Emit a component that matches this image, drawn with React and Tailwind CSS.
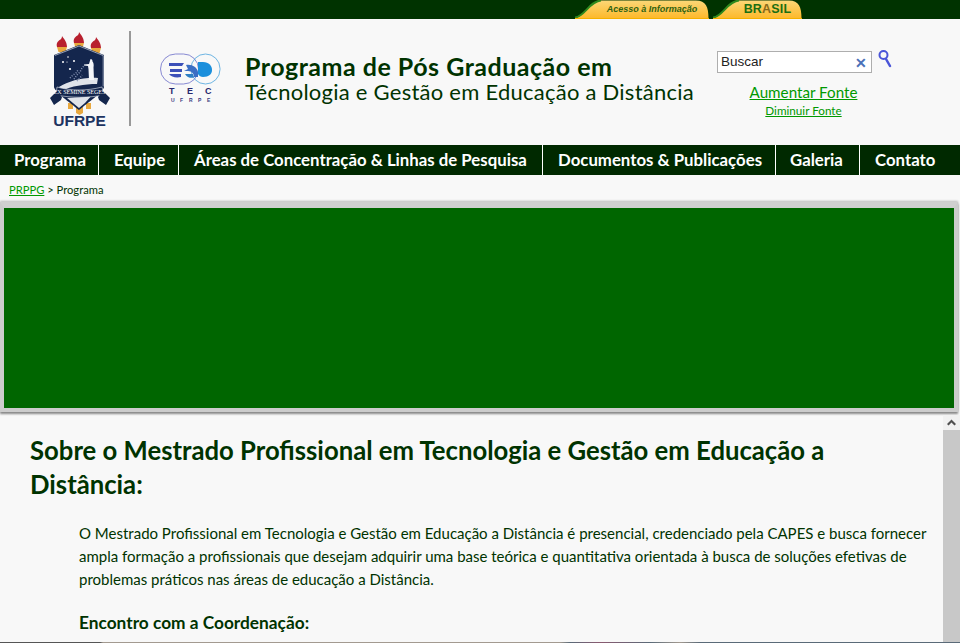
function Crest() {
  return (
    <svg width="60" height="97" viewBox="0 0 60 97" className="block">
      {[[12, 5], [29, 1], [46, 6]].map(([x, y], i) => (
        <g key={i}>
          <path d={`M${x - 5} ${y + 11}h10l-1.500 5h-7z`} fill="#e8a83e" />
          <path d={`M${x - 5} ${y + 11}c-1-4 1-6 3.500-7.500 1-1 1.500-2 1.500-3.500 1 2 5 5 5 11z`} fill="#b8202e" />
        </g>
      ))}
      <path d="M18 72h5v6h-5zM36 72h5v6h-5z" fill="#e8a83e" />
      <path d="M26 76h7v6l-3.500 2-3.500-2z" fill="#e8a83e" />
      <path d="M4 24 29 14l25 10v32c0 4-16 16-25 23C20 72 4 60 4 56z" fill="#14264d" />
      <path d="M4.800 24.500 29 15l24.200 9.500v31" fill="none" stroke="#cfd5e3" strokeWidth="0.700" />
      <path d="M9 56c10-6 24-10 39-9l-1 6c-13 0-25 2-36 7z" fill="#dfe3ea" />
      <path d="M17 67c8 0 16-1 26-4l-8 9-6 5z" fill="#dfe3ea" />
      <circle cx="13" cy="31" r="1" fill="#fff" /><circle cx="18" cy="26" r="0.800" fill="#fff" /><circle cx="24" cy="30" r="1" fill="#fff" /><circle cx="20" cy="38" r="1.100" fill="#fff" /><circle cx="17" cy="31" r="0.600" fill="#fff" />
      <path d="M40.500 28c1.500 0 2 1 2 2.500 1 1 1.500 3 1 6l.5 12.500h-5l-.5-11-.5-3-4-.5v-1l5-.5z" fill="#f4f6fa" />
      <path d="M24 48l3-4 3-3 2-4 2-2M20 47l3-3 3-2 2-3M27 50l3-3 2-3" stroke="#8592b3" strokeWidth="1.500" strokeDasharray="1 1.500" fill="none" />
      <path d="M7 56c14 4 30 4 45 0l2 8c-16 3-32 3-48 0z" fill="#14264d" stroke="#e6e9f0" strokeWidth="0.600" />
      <path d="M0 67l7-7 5 6-1 3-7 5zM60 67l-7-7-5 6 1 3 7 5z" fill="#14264d" />
      <text x="29.500" y="63" textAnchor="middle" fontSize="6" fill="#fff" fontFamily="Liberation Serif">EX SEMINE SEGES</text>
      <text x="29.500" y="95" textAnchor="middle" fontSize="15.500" fontWeight="700" fill="#1d3461" fontFamily="Liberation Sans">UFRPE</text>
    </svg>
  );
}
function Ead() {
  return (
    <svg width="62" height="50" viewBox="0 0 62 50" className="block">
      <rect x="0.500" y="1" width="38" height="30" rx="15" fill="none" stroke="#6a6cc8" strokeWidth="0.800" />
      <rect x="31" y="1" width="29" height="30" rx="14.500" fill="none" stroke="#4aa3dc" strokeWidth="0.800" />
      <path d="M9 10h15l-2 3H9zM10 16h12v3H10zM9 21h12v3c-5 1-10 0-12-3z" fill="#3c50b8" />
      <path d="M26 12c6-1 11 2 12 7v5h-4c0-3-2-6-6-6h-4l4-2z" fill="#3b6ec4" />
      <path d="M25 21h8l1 3.500c-3 1-7 0-9-3.500z" fill="#2f7fc4" />
      <path d="M38 9h5c6 0 9 4 9 8s-3 7-9 7c-2 0-4-1-5-3z" fill="#1b8fdc" />
      <text x="9 27 45" y="41" fontSize="9" fontWeight="700" fill="#26266b" fontFamily="Liberation Sans">TEC</text>
      <text x="11 20 29 38 47" y="48.500" fontSize="5" fontWeight="700" fill="#3a3a80" fontFamily="Liberation Sans">UFRPE</text>
    </svg>
  );
}
function Tab({ width, children }) {
  return (
    <div className="relative h-[19px]" style={{ width }}>
      <svg className="absolute inset-0" width={width} height="19" viewBox={`0 0 ${width} 19`}>
        <defs>
          <linearGradient id="tabg" x1="0" y1="0" x2="0" y2="1"><stop offset="0" stopColor="#fbd777" /><stop offset="1" stopColor="#fdb92c" /></linearGradient>
        </defs>
        <path d={`M0 18c10-1 14-17 26-17.500H${width - 13}c10 0 12.500 7 12.500 17.500z`} fill="url(#tabg)" />
        <path d="M0 17.500c10-1 14-16 26-17" fill="none" stroke="#2f8a1e" strokeWidth="2" />
        <path d={`M0 18.500H${width}`} stroke="#f5b000" />
      </svg>
      <div className="absolute inset-0 flex items-center justify-center pl-[20px]">{children}</div>
    </div>
  );
}
const nav = [
  ["Programa", "w-[99px] pl-[14px] border-r"],
  ["Equipe", "w-[80px] pl-[15px] border-r"],
  ["Áreas de Concentração & Linhas de Pesquisa", "w-[364px] pl-[15px] border-r"],
  ["Documentos & Publicações", "w-[233px] pl-[15px] border-r"],
  ["Galeria", "w-[84px] pl-[14px] border-r"],
  ["Contato", "pl-[15px]"],
];
export default function App() {
  return (
    <div className="h-[643px] w-[960px] overflow-hidden bg-[#f8f8f8] font-['Lato',sans-serif] text-[#003300]">
      <div className="flex h-[19px] gap-[4px] bg-[#003300] pl-[575px]">
        <Tab width={134}><span className="font-['Liberation_Sans'] text-[9px] font-bold italic text-[#2f6212]">Acesso à Informação</span></Tab>
        <Tab width={89}><span className="font-['Liberation_Sans'] text-[12.500px] font-bold leading-none tracking-[0.2px] text-[#1a6e12]">BR<span className="text-[#8a6a1a]">A</span>SIL</span></Tab>
      </div>
      <header className="flex h-[126px] items-start">
        <div className="ml-[50px] mt-[12px] w-[60px]"><Crest /></div>
        <div className="ml-[19px] mt-[12px] h-[95px] w-[2px] bg-[#999999]" />
        <div className="ml-[29px] mt-[34px] w-[62px]"><Ead /></div>
        <div className="ml-[23px] mt-[34px] w-[461px]">
          <div className="whitespace-nowrap text-[25px] font-bold leading-[27px] tracking-[0.5px] text-[#003300]">Programa de Pós Graduação em</div>
          <div className="whitespace-nowrap text-[22px] leading-[24px] tracking-[0.25px] text-[#003300]">Técnologia e Gestão em Educação a Distância</div>
        </div>
        <div className="ml-[11px] mt-[32px] w-[190px]">
          <div className="flex items-start">
            <div className="flex h-[22px] w-[155px] items-center justify-between border border-[#aeaeae] bg-white pl-[3px] pr-[4px] pt-[1px] font-['Liberation_Sans'] text-[13.500px] text-[#222222]">
              <span>Buscar</span>
              <span className="text-[14px] font-bold leading-none text-[#4a70b8]">✕</span>
            </div>
            <svg width="14" height="20" viewBox="0 0 14 20" className="ml-[6px] -mt-[2px]">
              <circle cx="5.500" cy="6" r="4" fill="none" stroke="#4a55d8" strokeWidth="2" />
              <path d="M8 10l4 7" stroke="#4a55d8" strokeWidth="2.500" strokeLinecap="round" />
            </svg>
          </div>
          <div className="mt-[9px] w-[173px] text-center leading-none">
            <a className="block text-[15.200px] leading-[20px] text-[#009900] underline">Aumentar Fonte</a>
            <a className="block text-[11.700px] leading-[16px] text-[#009900] underline">Diminuir Fonte</a>
          </div>
        </div>
      </header>
      <nav className="flex h-[30px] bg-[#002900]">
        {nav.map(([n, c]) => (
          <div key={n} className={`flex h-full items-center whitespace-nowrap border-white text-[16.800px] font-bold text-white ${c}`}>{n}</div>
        ))}
      </nav>
      <div className="h-[27px] pl-[9px] pt-[7px] text-[11.200px] leading-[16px]"><a className="text-[#009900] underline">PRPPG</a> &gt; Programa</div>
      <div className="h-[210px] w-[958px] border-x-[4px] border-b-[4px] border-t-[6px] border-x-[#cccccc] border-b-[#cccccc] border-t-[#d0d0d0] bg-[#006600] shadow-[0_2px_2px_#888888,0_-1px_2px_#bbbbbb]" />
      <div className="flex h-[230px] overflow-hidden">
        <main className="w-[943px] pl-[30px] pr-[10px] pt-[21px]">
          <h1 className="text-[25.700px] font-bold leading-[34px] text-[#003300]">Sobre o Mestrado Profissional em Tecnologia e Gestão em Educação a Distância:</h1>
          <p className="mt-[21px] pl-[49px] text-[15px] leading-[23px]">O Mestrado Profissional em Tecnologia e Gestão em Educação a Distância é presencial, credenciado pela CAPES e busca fornecer ampla formação a profissionais que desejam adquirir uma base teórica e quantitativa orientada à busca de soluções efetivas de problemas práticos nas áreas de educação a Distância.</p>
          <p className="mt-[20px] pl-[49px] text-[17.300px] font-bold leading-[24px]">Encontro com a Coordenação:</p>
        </main>
        <div className="ml-auto flex w-[17px] flex-col pt-[3px]">
          <div className="flex h-[15px] items-center justify-center bg-[#f1f1f1]">
            <svg width="9" height="7" viewBox="0 0 9 7"><path d="M0 5l4.500-4.500L9 5 7.500 6.500 4.500 3.500 1.500 6.500z" fill="#505050" /></svg>
          </div>
          <div className="flex-1 bg-[#c8c8c8]" />
        </div>
      </div>
      <div className="h-[1px] bg-[linear-gradient(90deg,#555555_0,#555555_100px,#a39a90_103px,#a39a90_560px,#5a6a78_570px,#8a5a70_600px,#5a6a78_650px,#a39a90_680px,#5a6a78_700px,#5a6a78_960px)]" />
    </div>
  );
}
